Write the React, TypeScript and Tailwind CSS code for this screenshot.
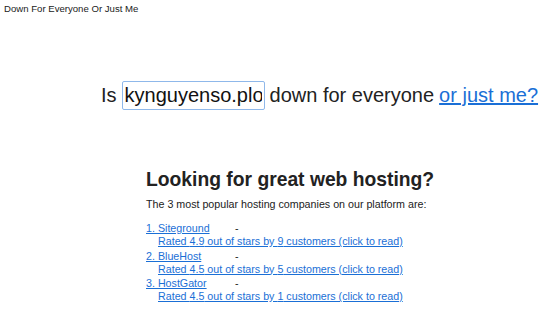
import React from 'react';

const hosts = [
  { name: '1. Siteground', rating: '4.9', count: 9 },
  { name: '2. BlueHost', rating: '4.5', count: 5 },
  { name: '3. HostGator', rating: '4.5', count: 1 },
];

export default function App() {
  return (
    <div className="min-h-screen bg-white text-[#222] font-['Liberation_Sans',Arial,sans-serif]">
      <div className="px-[4px] pt-[3px] text-[9.6px] leading-[11px]">Down For Everyone Or Just Me</div>

      <div className="pl-[101px] mt-[67px] flex items-center text-[20px] leading-[23px]">
        <span>Is</span>
        <input
          readOnly
          value="kynguyenso.plo"
          className="ml-[5px] mr-[5px] w-[143px] h-[29px] px-[2px] border border-[#8fb8ea] rounded-[2px] outline-none text-[20px] text-[#111] font-['Liberation_Sans',Arial,sans-serif]"
        />
        <span>down for everyone</span>
        <a href="#" className="ml-[5px] text-[#1a6fd6] underline">
          or just me?
        </a>
      </div>

      <div className="pl-[146px] mt-[59px]">
        <h1 className="text-[19.3px] leading-[22px] font-bold">Looking for great web hosting?</h1>
        <p className="mt-[7px] text-[10.7px] leading-[13px]">
          The 3 most popular hosting companies on our platform are:
        </p>
        <div className="mt-[11px] text-[10.7px] leading-[13px] flex flex-col gap-[1.5px]">
          {hosts.map((h) => (
            <div key={h.name}>
              <div className="flex">
                <a href="#" className="w-[89px] text-[#1a6fd6] underline">
                  <span>{h.name}</span>
                </a>
                <span>-</span>
              </div>
              <div className="pl-[12px]">
                <a href="#" className="text-[#1a6fd6] underline">
                  Rated {h.rating} out of stars by {h.count} customers (click to read)
                </a>
              </div>
            </div>
          ))}
        </div>
      </div>
    </div>
  );
}
